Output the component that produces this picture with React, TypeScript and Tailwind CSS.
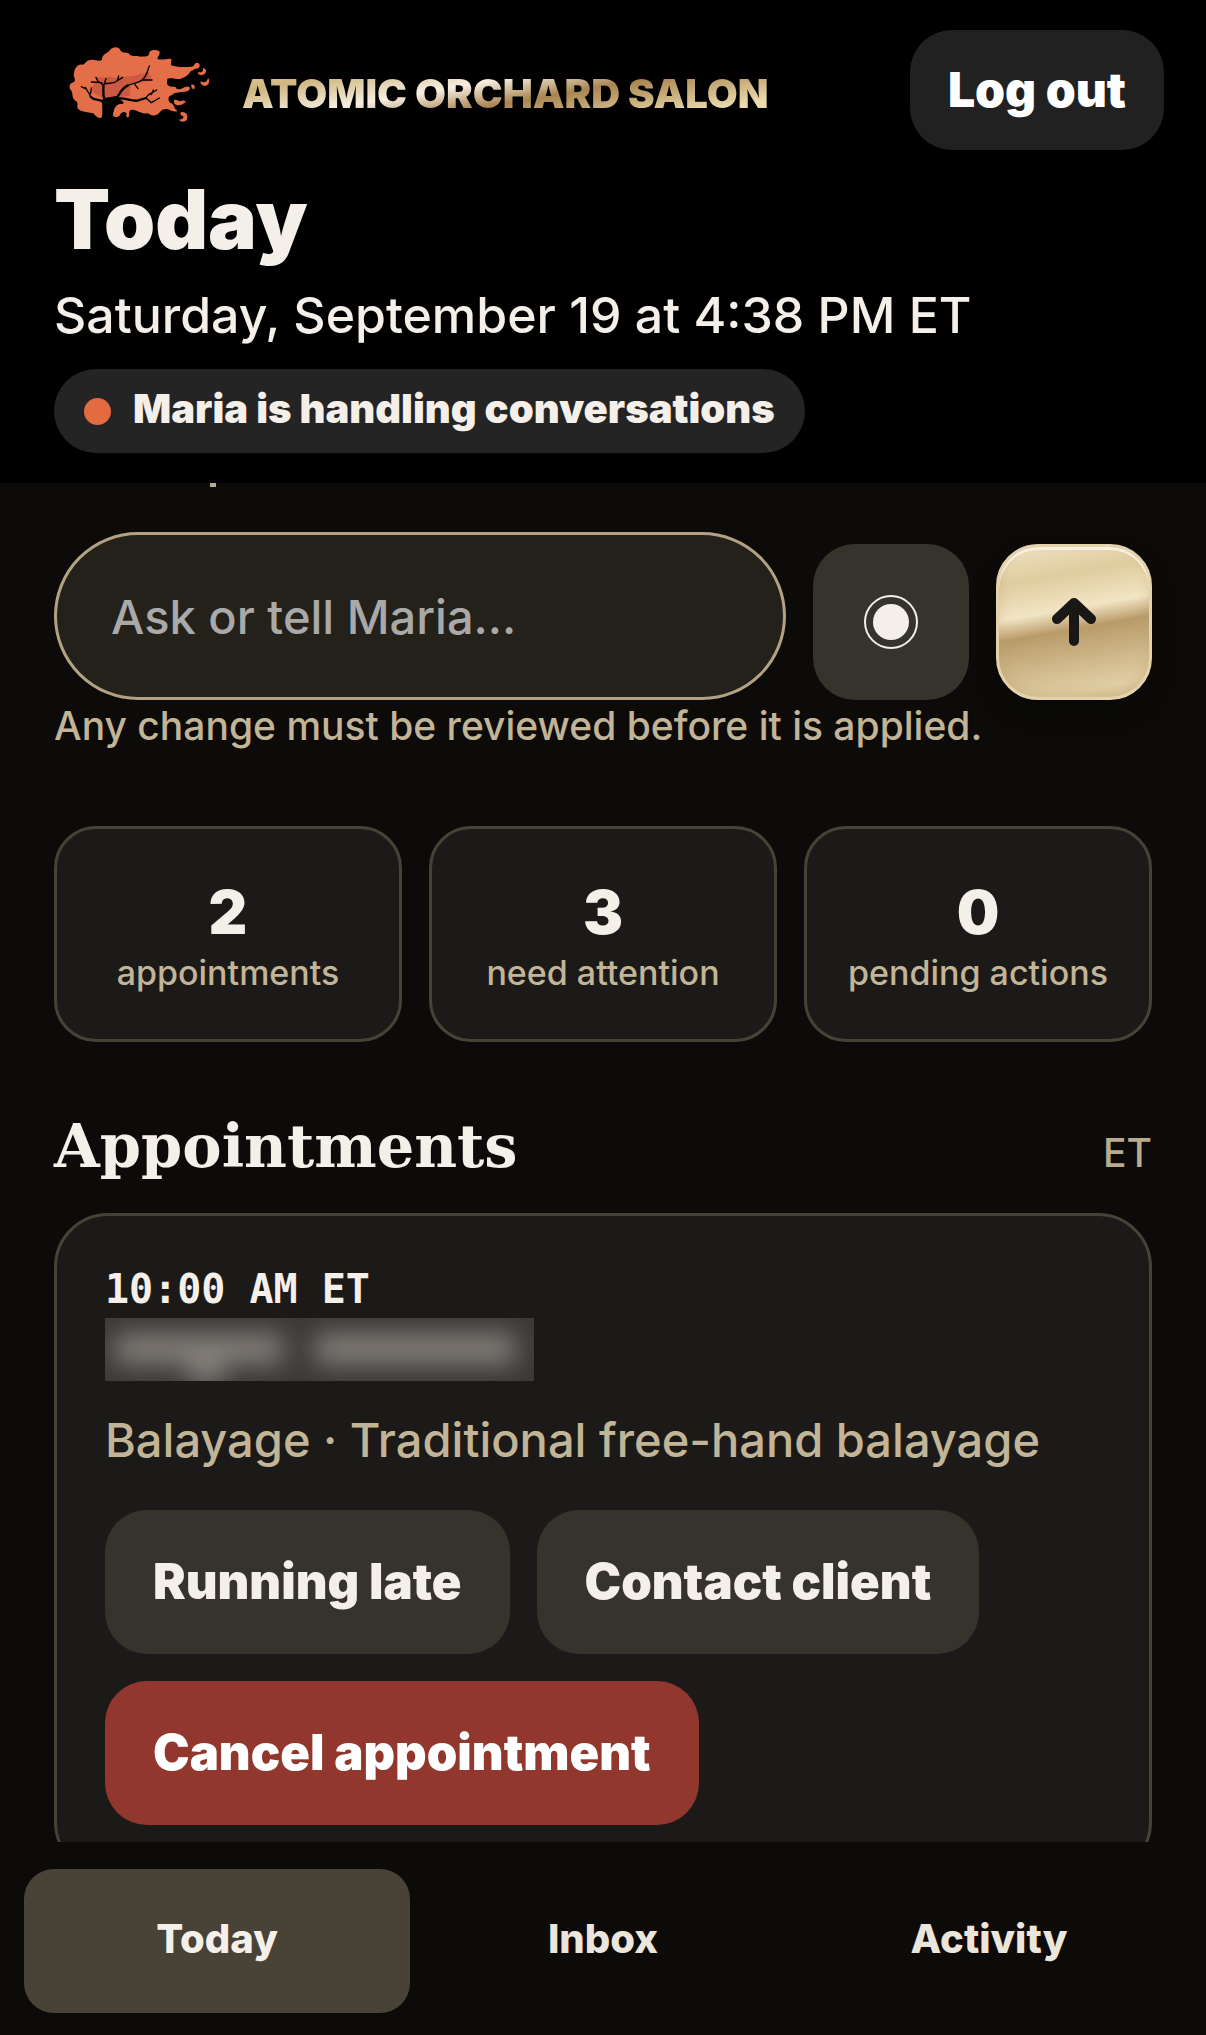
import { useState } from 'react';
import type { FormEvent } from 'react';

const stats = [
  { label: 'appointments', value: 2 },
  { label: 'need attention', value: 3 },
  { label: 'pending actions', value: 0 },
];

const tabs = ['Today', 'Inbox', 'Activity'];

export default function App() {
  const [tab, setTab] = useState('Today');

  return (
    <div className="h-screen flex flex-col overflow-hidden bg-[#0c0b09] text-[#f4efe9] font-['Inter',sans-serif]">
      <Header />

      <main className="flex-1 min-h-0 overflow-hidden px-[54px]">
        {/* End of the section title scrolled under the header */}
        <div className="ml-[156px] h-1 w-1.5 bg-[#b5ab9b]" />

        <Composer />

        <section className="mt-[74px] grid grid-cols-3 gap-[27px]">
          {stats.map((s) => (
            <div
              key={s.label}
              className="h-[216px] pt-2 flex flex-col items-center justify-center rounded-[42px] border-3 border-[#474236] bg-[#1c1a18]"
            >
              <strong className="text-[60px] leading-[70px] font-black">{s.value}</strong>
              <span className="text-[34px] leading-[52px] font-medium text-[#c2b597]">{s.label}</span>
            </div>
          ))}
        </section>

        <section className="mt-[63px]">
          <div className="flex items-baseline justify-between">
            <h2 className="font-['DejaVu_Serif',serif] text-[59px] leading-[84px] font-bold">Appointments</h2>
            <span className="text-[39px] font-medium text-[#b9ac8e]">ET</span>
          </div>
          <AppointmentCard />
        </section>
      </main>

      <nav className="shrink-0 grid grid-cols-3 px-6 pt-[27px] pb-[22px]">
        {tabs.map((t) => (
          <button
            key={t}
            type="button"
            onClick={() => setTab(t)}
            className={`h-36 pb-1 rounded-[30px] text-[40px] font-extrabold ${t === tab ? 'bg-[#494236] text-[#f4efe9]' : 'text-[#ebe5dc]'}`}
          >
            {t}
          </button>
        ))}
      </nav>
    </div>
  );
}

function Header() {
  return (
    <header className="shrink-0 bg-black pl-[54px] pr-[42px] pt-[30px] pb-[30px]">
      <div className="flex items-center justify-between">
        <div className="flex items-center gap-[22px] pl-1.5">
          <Logo />
          <span className="pt-2 text-[40px] leading-[48px] font-black text-transparent bg-clip-text bg-[linear-gradient(170deg,#e8d8b0_0%,#cfb680_20%,#f6eee0_42%,#a98550_59%,#ecdcae_88%)]">
            ATOMIC ORCHARD SALON
          </span>
        </div>
        <button type="button" className="h-[120px] px-[38px] rounded-[42px] bg-[#212121] text-white text-[48px] font-black">
          Log out
        </button>
      </div>
      <h1 className="mt-[22px] text-[82px] leading-[96px] font-black">Today</h1>
      <p className="mt-3.5 text-[50px] leading-[66px] font-medium">Saturday, September 19 at 4:38 PM ET</p>
      <div className="mt-[21px] h-[84px] inline-flex items-center gap-[22px] px-[30px] rounded-full bg-[#242424]">
        <span className="size-[27px] rounded-full bg-[#e46b40]" />
        <span className="pb-1 text-[40px] font-black">Maria is handling conversations</span>
      </div>
    </header>
  );
}

function Composer() {
  const [message, setMessage] = useState('');

  const send = (e: FormEvent) => {
    e.preventDefault();
    setMessage('');
  };

  return (
    <form onSubmit={send} className="mt-[45px]">
      <div className="flex items-end gap-[27px]">
        <input
          type="text"
          aria-label="Message Maria"
          placeholder="Ask or tell Maria..."
          value={message}
          onChange={(e) => setMessage(e.target.value)}
          className="flex-1 min-w-0 h-[168px] px-[54px] rounded-full border-3 border-[#b3a184] bg-[#24201a] text-[47px] font-medium placeholder:text-[#a9a9a9] outline-none"
        />
        <button
          type="button"
          aria-label="Record a voice message"
          className="size-[156px] shrink-0 grid place-items-center rounded-[42px] bg-[#36332c]"
        >
          <svg viewBox="0 0 56 56" className="size-14">
            <circle cx="28" cy="28" r="26" fill="none" stroke="#f4efe9" strokeWidth="2" />
            <circle cx="28" cy="28" r="18" fill="#f4efe9" />
          </svg>
        </button>
        <button
          type="submit"
          aria-label="Send"
          className="size-[156px] shrink-0 grid place-items-center rounded-[42px] border-3 border-[#e3d2ab] bg-[linear-gradient(170deg,#efe2c2_0%,#dfcc9f_22%,#f2e5c4_42%,#b99b6a_54%,#e2d0a6_90%,#d8c496_100%)] shadow-[inset_0_3px_0_#f8efdf,inset_0_-6px_12px_#b99b6a55,0_12px_24px_#00000044]"
        >
          <svg viewBox="0 0 44 50" className="w-11 h-[50px]" fill="none" stroke="#1a1816" strokeWidth="10" strokeLinecap="round" strokeLinejoin="round">
            <path d="M22 44V7M5 22 22 6l17 16" />
          </svg>
        </button>
      </div>
      <p className="text-[39px] leading-[52px] font-medium text-[#c2b597]">
        Any change must be reviewed before it is applied.
      </p>
    </form>
  );
}

function AppointmentCard() {
  return (
    <article className="mt-6 p-12 rounded-[54px] border-3 border-[#474236] bg-[#1c1a18]">
      <time className="block pb-1 font-['DejaVu_Sans_Mono',monospace] text-[40px] leading-[50px] font-bold">10:00 AM ET</time>
      {/* Client name is redacted */}
      <div className="h-[63px] w-[429px] overflow-hidden bg-[#3a3937]">
        <svg viewBox="0 0 429 63" className="size-full">
          <defs>
            <filter id="soft" x="-20%" y="-60%" width="140%" height="220%">
              <feGaussianBlur stdDeviation="13" />
            </filter>
          </defs>
          <g filter="url(#soft)" fill="#85807b">
            <rect x="10" y="16" width="168" height="30" />
            <rect x="84" y="28" width="34" height="38" />
            <rect x="210" y="16" width="200" height="30" />
          </g>
        </svg>
      </div>
      <p className="mt-[26px] text-[47px] leading-[66px] font-medium text-[#c2b597]">
        Balayage · Traditional free-hand balayage
      </p>
      <div className="mt-[37px] flex flex-wrap gap-[27px] text-[49px] font-black">
        <button type="button" className="h-36 px-12 rounded-[42px] bg-[#36332c]">
          Running late
        </button>
        <button type="button" className="h-36 px-12 rounded-[42px] bg-[#36332c]">
          Contact client
        </button>
        <button type="button" className="h-36 px-12 rounded-[42px] bg-[#91372d] text-white">
          Cancel appointment
        </button>
      </div>
    </article>
  );
}

function Logo() {
  return (
    <svg viewBox="0 6 480 288" className="w-40 h-24 shrink-0" role="img" aria-label="Atomic Orchard Salon">
      {/* Windblown crown */}
      <path
        fill="#e46e47"
        d="M126 60C124 44 142 40 150 30C158 20 176 18 182 32C188 40 198 36 206 40C212 52 228 46 242 50C256 48 266 52 268 38C268 28 290 28 298 34C302 42 294 48 292 56C302 62 314 56 330 56C340 58 330 66 334 76C348 82 370 82 394 80C404 80 402 68 410 68C422 68 422 82 412 86C404 84 400 92 392 94C384 106 376 112 362 116C350 120 340 112 322 116C322 126 318 134 328 138C340 144 344 136 350 146C362 152 366 142 378 140C392 138 394 148 382 154C362 158 344 156 338 164C324 168 322 176 330 188C344 190 340 206 352 212C348 218 342 212 334 212C320 204 308 206 300 216C290 230 272 228 264 220C248 222 240 216 230 212C212 206 206 210 208 226C204 238 196 232 200 220C192 212 184 216 178 228C170 234 160 230 158 224C160 206 166 190 186 192C206 188 166 170 132 178C122 186 130 206 126 230C120 238 108 232 100 220C84 216 62 216 54 206C48 196 58 188 46 182C34 172 40 162 34 152C26 144 26 130 42 126C50 118 38 110 42 98C44 86 52 72 66 74C78 74 76 60 92 60C106 56 112 66 126 60Z"
      />
      <path fill="#e46e47" d="M180 178L250 170L300 190L270 212L200 194Z" />
      <g fill="#e46e47">
        <path d="M428 84C444 86 440 104 424 106C416 104 412 100 414 96C424 100 432 94 428 84Z" />
        <path d="M444 114C452 122 446 138 434 138C424 136 420 130 422 124C432 130 442 126 444 114Z" />
        <path d="M394 134C402 132 408 140 402 148C396 146 392 140 394 134Z" />
        <path d="M342 180C350 176 354 184 362 184C368 180 374 180 378 186C370 190 366 196 352 196C344 194 340 188 342 180Z" />
        <path d="M364 216C380 214 386 228 380 240C372 248 360 246 356 238C364 240 372 236 370 228C362 228 358 220 364 216Z" />
      </g>
      {/* Shaded foliage */}
      <path fill="#cc5a43" d="M96 142C104 134 104 118 118 110C134 114 146 108 156 112C180 118 196 106 218 108C238 100 258 102 262 92C270 100 270 112 280 120C264 128 232 124 216 136C204 144 216 156 210 166C190 174 160 164 134 176C112 166 90 158 96 142Z" />
      {/* Trunk and branches */}
      <path fill="#000" d="M126 238C132 216 132 198 122 182L134 174L168 168L190 186C168 188 158 206 158 240Z" />
      <g fill="none" stroke="#000" strokeLinecap="round" strokeLinejoin="round">
        <path strokeWidth="7" d="M128 184C112 176 102 182 92 170M134 180C126 160 132 150 130 134M166 178C180 168 176 150 204 136M170 176C198 172 210 184 232 182L258 174" />
        <path strokeWidth="4" d="M92 170C88 158 80 152 76 142M92 160L94 144M76 146L64 140M130 136L114 124L108 112M126 128L94 126M132 134L138 116M132 132C150 128 164 132 172 122L188 112M172 122L176 108M204 136C226 126 236 130 246 120C262 108 262 92 268 78M246 120L276 120M222 130L234 146M258 174C264 160 276 160 290 150M258 174L274 188L298 174M274 164L280 150" />
      </g>
    </svg>
  );
}
